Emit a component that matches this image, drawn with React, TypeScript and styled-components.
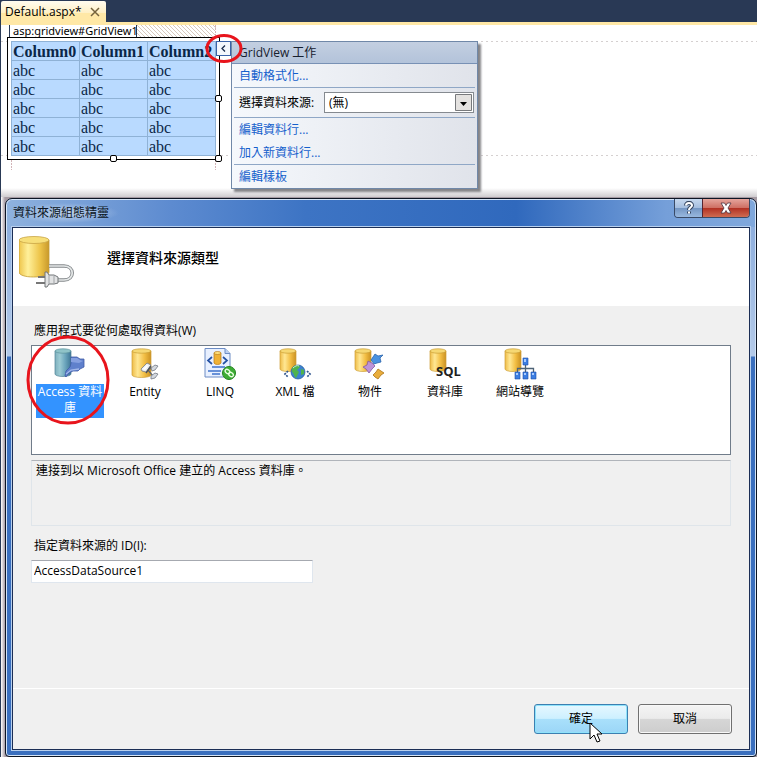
import React, { useState } from "react";
import styled, { createGlobalStyle, css } from "styled-components";

const uiFont = '"Open Sans", "Noto Sans CJK TC", sans-serif';
const dark = "#293955";

const GlobalStyle = createGlobalStyle`
  * { box-sizing: border-box; }
  html, body { margin: 0; padding: 0; }
  body { background: #fff; font: 12px/16px ${uiFont}; color: #000; }
  button, input, select { font: inherit; color: inherit; }
`;

const Page = styled.main`
  display: flex;
  flex-direction: column;
  min-height: 100vh;
  border-left: 1px solid ${dark};
  overflow: hidden;
`;

/* ---------- editor ---------- */

const TabBar = styled.header`
  display: flex;
  align-items: flex-end;
  height: 25px;
  background: ${dark};
  border-bottom: 3px solid #ffe8a6;
`;

const EditorTab = styled.div`
  display: flex;
  align-items: center;
  gap: 8px;
  height: 24px;
  margin-bottom: -3px;
  padding: 0 6px 2px 4px;
  border-radius: 2px 2px 0 0;
  background: linear-gradient(#fffcf0, #fff0c4 50%, #ffe8a6 52%);
`;

const TabClose = styled.button`
  display: flex;
  padding: 0;
  border: 0;
  background: none;
  color: #75633d;
`;

const Surface = styled.section`
  position: relative;
  height: 172px;
  padding-left: 6px;
  background: linear-gradient(#fff 163px, #cfcccf);
`;

const Guides = styled.svg`
  position: absolute;
  inset: 0;
  width: 100%;
  height: 100%;
`;

const ControlTag = styled.div`
  position: relative;
  width: 128px;
  height: 12px;
  margin-left: 2px;
  padding-left: 3px;
  border: solid ${dark};
  border-width: 0 1px;
  background: #fff;
  font: 11px/11px "Noto Sans", sans-serif;
  white-space: nowrap;
`;

const Selection = styled.div`
  position: relative;
  width: 213px;
  padding: 3px;
  border: 1px solid #000;
  background: #fff;
`;

const Grid = styled.table`
  width: 205px;
  border-collapse: collapse;
  table-layout: fixed;
  background: #b9daff;
  color: #0b2748;
  font: 16px/18px "Liberation Serif", serif;

  th, td {
    height: 19px;
    padding: 1px 0 0 1px;
    border: 1px solid #8fb2d6;
    line-height: 17px;
    text-align: left;
    white-space: nowrap;
  }
`;

const Handle = styled.span<{ $x: string; $y: string }>`
  position: absolute;
  left: ${(p) => p.$x};
  top: ${(p) => p.$y};
  width: 7px;
  height: 7px;
  margin: -4px 0 0 -4px;
  border: 1px solid #000;
  border-radius: 2px;
  background: #fff;
`;

const SmartTag = styled.button`
  position: absolute;
  left: 208px;
  top: 3px;
  z-index: 3;
  display: flex;
  align-items: center;
  justify-content: center;
  width: 15px;
  height: 15px;
  padding: 0;
  border: 1px solid #3a62a8;
  background: #f4f7fc;
`;

const Ring = styled.svg<{ $x: number; $y: number }>`
  position: absolute;
  left: ${(p) => p.$x}px;
  top: ${(p) => p.$y}px;
  z-index: 4;
  fill: none;
  stroke: #e8141c;
  stroke-width: 3;
  pointer-events: none;
`;

const TaskPanel = styled.aside`
  position: absolute;
  left: 230px;
  top: 16px;
  z-index: 2;
  width: 247px;
  border: 1px solid #7088a8;
  background: linear-gradient(90deg, #f5f8fc, #e0e3ea);
  box-shadow: 3px 3px 2px #848488;
`;

const PanelTitle = styled.h2`
  margin: 0;
  padding: 0 7px;
  border-bottom: 1px solid #7891b5;
  background: linear-gradient(#c3cfe1, #b3c3da);
  color: #16202e;
  font: 12px/21px ${uiFont};
`;

const TaskGroup = styled.div`
  display: flex;
  flex-direction: column;
  align-items: flex-start;
  margin: 0 2px;
  padding: 0 5px;
  & + & { border-top: 1px solid #8fa7c6; }
`;

const TaskLink = styled.a`
  color: #1560cc;
  line-height: 23px;
  text-decoration: none;
`;

const SourceRow = styled.label`
  display: flex;
  align-items: center;
  align-self: stretch;
  justify-content: space-between;
  height: 29px;
  margin-right: -4px;
`;

const SelectBox = styled.span`
  position: relative;
  width: 150px;
  height: 21px;
`;

const SourceSelect = styled.select`
  width: 100%;
  height: 100%;
  padding: 0 20px 0 4px;
  border: 1px solid #858a90;
  border-radius: 0;
  background: #fff;
  appearance: none;
`;

const Arrow = styled.svg`
  position: absolute;
  right: 2px;
  top: 2px;
  pointer-events: none;
`;

/* ---------- wizard dialog ---------- */

const DialogArea = styled.div`
  display: flex;
  flex: 1;
  padding: 1px 0 0 4px;
  background: linear-gradient(90deg, #fff, #a69ba3 4px);
`;

const Dialog = styled.section`
  display: flex;
  flex: 1;
  flex-direction: column;
  padding: 0 6px 6px;
  border: 1px solid #0c1524;
  border-radius: 7px 7px 4px 4px;
  background:
    linear-gradient(90deg, #8fb2de, #5d8bd0 22%, #3d74c4 40%, #3069bd 68%, #759fd9 88%, #80a8dc) 0 0 / 100% 28px no-repeat,
    linear-gradient(#86a9dc, #b4cae9 157px, #3a6fbe 158px);
  box-shadow: inset 0 0 0 1px #d4e4f7;
`;

const TitleBar = styled.header`
  display: flex;
  align-items: center;
  justify-content: space-between;
  height: 28px;
`;

const DialogTitle = styled.h1`
  margin: 0;
  padding: 0 10px 0 1px;
  background: radial-gradient(closest-side, #c0d3ec, transparent);
  color: #0a1422;
  font: 12px/20px ${uiFont};
`;

const WindowButtons = styled.div`
  display: flex;
  align-self: flex-start;
  height: 19px;
  border: 1px solid #394a66;
  border-top: 0;
  border-radius: 0 0 4px 4px;
  overflow: hidden;
`;

const WindowButton = styled.button<{ $danger?: boolean }>`
  display: flex;
  align-items: center;
  justify-content: center;
  width: ${(p) => (p.$danger ? 47 : 27)}px;
  padding: 0;
  border: 0;
  background: linear-gradient(#c6d8ee, #a5bedf 48%, #7395c2 50%, #98b8df);
  ${(p) =>
    p.$danger &&
    css`
      border-left: 1px solid #572430;
      background: linear-gradient(#e5a59c, #cf7064 48%, #b12f22 50%, #cf6c51);
    `}
`;

const Client = styled.div`
  display: flex;
  flex: 1;
  flex-direction: column;
  border: 1px solid #1b2e55;
  background: #f0f0f0;
  box-shadow: 0 0 0 1px #b8d0ee;
`;

const Banner = styled.div`
  display: flex;
  gap: 32px;
  height: 78px;
  padding: 7px 6px;
  background: #fff;
`;

const BannerText = styled.h2`
  margin: 0;
  padding-top: 13px;
  font: 500 14px/20px ${uiFont};
`;

const Body = styled.div`
  display: flex;
  flex: 1;
  flex-direction: column;
  padding: 17px 18px 0;
`;

const captionStyle = css`
  padding-left: 3px;
  line-height: 16px;
`;

const Caption = styled.label`
  ${captionStyle}
`;

const ListCaption = styled.div`
  ${captionStyle}
`;

const SourceList = styled.div`
  position: relative;
  display: flex;
  height: 110px;
  margin-top: 6px;
  padding: 2px 0;
  border: 1px solid #707c8a;
  background: #fff;
`;

const SourceItem = styled.button<{ $on: boolean }>`
  display: flex;
  flex-direction: column;
  align-items: center;
  gap: 4px;
  width: 75px;
  padding: 0 3px 0 4px;
  border: 0;
  background: none;
`;

const SourceLabel = styled.span<{ $on: boolean }>`
  width: 68px;
  padding-bottom: 2px;
  color: ${(p) => (p.$on ? "#fff" : "#000")};
  background: ${(p) => (p.$on ? "#3393ff" : "none")};
  line-height: 16px;
`;

const Description = styled.p`
  height: 66px;
  margin: 5px 0 12px;
  padding: 2px 4px;
  border: 1px solid #dfe5ea;
  border-top-color: #b0b4ba;
`;

const IdInput = styled.input`
  width: 282px;
  height: 23px;
  margin-top: 6px;
  padding: 0 2px 2px;
  border: 1px solid #dfe6ee;
  border-top-color: #a6a9b0;
  background: #fff;
`;

const Footer = styled.footer`
  display: flex;
  gap: 10px;
  justify-content: flex-end;
  padding: 15px 17px;
  border-top: 1px solid #fff;
`;

const ActionButton = styled.button<{ $primary?: boolean }>`
  position: relative;
  width: 94px;
  height: 30px;
  border: 1px solid ${(p) => (p.$primary ? "#3c7fb1" : "#707070")};
  border-radius: 3px;
  background: ${(p) =>
    p.$primary
      ? "linear-gradient(#e6f7ff, #cdf0ff 48%, #a9e0fb 50%, #9bd6f7)"
      : "linear-gradient(#f4f4f4, #ebebeb 48%, #d6d6d6 50%, #cdcdcd)"};
  box-shadow: inset 0 0 0 1px ${(p) => (p.$primary ? "#8fe3fb" : "#f8f8f8")};
`;

const Pointer = styled.svg`
  position: absolute;
  left: 54px;
  top: 17px;
`;

/* ---------- drawings ---------- */

type Kind = "access" | "entity" | "linq" | "xml" | "object" | "sql" | "site";

const Cylinder = ({ x, w, h, blue = false }: { x: number; w: number; h: number; blue?: boolean }) => {
  const id = blue ? "cylBlue" : "cylGold";
  const r = w / 2;
  return (
    <g>
      <defs>
        <linearGradient id={id}>
          <stop offset="0" stopColor={blue ? "#7fb0bd" : "#eebc48"} />
          <stop offset=".3" stopColor={blue ? "#9ccbd4" : "#ffe793"} />
          <stop offset=".65" stopColor={blue ? "#6aa4bb" : "#f3bf45"} />
          <stop offset="1" stopColor={blue ? "#3f7696" : "#cb9222"} />
        </linearGradient>
      </defs>
      <path
        d={`M${x} 3v${h - 5}a${r} 2.500 0 0 0 ${w} 0V3z`}
        fill={`url(#${id})`}
        stroke={blue ? "#4f8297" : "#cf9f38"}
        strokeWidth=".7"
      />
      <ellipse
        cx={x + r}
        cy="3"
        rx={r}
        ry="2.200"
        fill={blue ? "#8fc3c8" : "#f6d873"}
        stroke={blue ? "#5b929c" : "#c99e35"}
        strokeWidth=".7"
      />
    </g>
  );
};

const extras: Record<Kind, React.ReactNode> = {
  access: (
    <g>
      <path
        d="M17 9h6l3 2h4v8l-4 2-2 2h-5l-4 2-3 4-1-1 1-5 4-4 1-4z"
        fill="#5f80cc"
        stroke="#3f5aa6"
        strokeWidth=".8"
      />
      <path d="M17 10h6l3 2 3 1-4 2-8-1z" fill="#86a0e0" />
      <path d="M12 26l5-4 8-1" fill="none" stroke="#a3b8ea" strokeWidth="1.300" />
    </g>
  ),
  entity: (
    <g>
      <path d="M19 22l5 6M20 21l5-1" stroke="#5f656f" strokeWidth="1.200" />
      <g stroke="#747a84" strokeWidth=".8">
        <path d="M12 21l6-6 4 2-5 7-4-1z" fill="#eceff3" />
        <path d="M22 20l4-3 3 1-3 4-3 1zM22 28l4-3 3 1-3 4-4 1z" fill="#d3d8df" />
      </g>
      <path d="M14 21l4-4 1 1-3 4z" fill="#fff" />
      <path d="M17 25l5-7" stroke="#4c525c" strokeWidth="1.300" />
    </g>
  ),
  linq: (
    <g>
      <path d="M1 .5h20l5 5V29H1z" fill="#e8f0ff" stroke="#6c8cc4" />
      <path d="M21 .5v5h5" fill="#bdd0f0" stroke="#6c8cc4" />
      <path d="M8 9l-4 3.500 4 3.500M19 9l4 3.500-4 3.500" fill="none" stroke="#2451a3" strokeWidth="1.700" />
      <path d="M10 5v10c1 2 6 2 7 0V5z" fill="#efb135" stroke="#b87915" strokeWidth=".7" />
      <ellipse cx="13.500" cy="5" rx="3.500" ry="1.500" fill="#ffe07c" stroke="#b87915" strokeWidth=".7" />
      <path d="M8 19h13M4 23h13M8 26h8" stroke="#3e72cc" strokeWidth="1.500" />
      <circle cx="25" cy="25" r="6.500" fill="#3ead35" stroke="#23831f" />
      <g fill="none" stroke="#e8ffe0" strokeWidth="1.300">
        <ellipse cx="23.500" cy="23.500" rx="2.600" ry="1.800" transform="rotate(40 23.500 23.500)" />
        <ellipse cx="27" cy="26.500" rx="2.600" ry="1.800" transform="rotate(40 27 26.500)" />
      </g>
    </g>
  ),
  xml: (
    <g>
      <circle cx="19" cy="24" r="7" fill="#3c82cf" stroke="#24599a" strokeWidth=".7" />
      <path d="M13 20c3-4 8-3 8-1l-3 3 2 2-3 6c-2-1-2-5-4-6zM22 21l3 1v4l-3 1z" fill="#4fb34d" />
      <path d="M14 20c2-2 4-3 6-2" fill="none" stroke="#c9ecd8" />
      <path d="M9 23l-3 3 3 3M28 23l3 3-3 3" fill="none" stroke="#31568e" strokeWidth="1.700" strokeDasharray="2 1" />
    </g>
  ),
  object: (
    <g strokeWidth=".8">
      <path d="M17 12l4-6 3 2 5-1-3 3 1 4-4 1-3 1z" fill="#4a92e0" stroke="#2b65ac" />
      <path d="M9 19l4-2 1-4 4 2 3 3-3 3-3 4-3-4z" fill="#bd93d8" stroke="#8459a5" />
      <path d="M19 27l3-3 2-3 3 2 3 2-3 2-3 4-3-2z" fill="#e9ad3c" stroke="#ad7415" />
    </g>
  ),
  sql: (
    <text x="7" y="28" fontFamily="Open Sans, sans-serif" fontSize="13" fontWeight="700" fill="#1f1f1f">
      SQL
    </text>
  ),
  site: (
    <g>
      <path d="M21.500 17v7M13.500 24v-3.500h16V24" fill="none" stroke="#4d6275" strokeWidth="1.300" />
      <g fill="#3d7ee2" stroke="#1d4da8" strokeWidth=".6">
        <path d="M19 10h5v7h-5zM11 24h5v7h-5zM19 24h5v7h-5zM27 24h5v7h-5z" />
      </g>
      <path d="M20 11h2v3h-2zM12 25h2v2h-2zM20 25h2v2h-2zM28 25h2v2h-2z" fill="#a8cbff" />
    </g>
  ),
};

const SourceIcon = ({ kind }: { kind: Kind }) => (
  <svg width="32" height="32" viewBox="0 0 32 32" overflow="visible" aria-hidden="true">
    {kind === "access" && <Cylinder x={1} w={16} h={28} blue />}
    {kind === "entity" && <Cylinder x={3} w={19} h={29} />}
    {["xml", "object", "sql", "site"].includes(kind) && <Cylinder x={1} w={16} h={23} />}
    {extras[kind]}
  </svg>
);

const BannerIcon = () => (
  <svg width="56" height="54" viewBox="0 0 56 54" aria-hidden="true">
    <defs>
      <linearGradient id="bigGold">
        <stop offset="0" stopColor="#eec54b" />
        <stop offset=".3" stopColor="#fff09a" />
        <stop offset=".7" stopColor="#edc449" />
        <stop offset="1" stopColor="#c9992b" />
      </linearGradient>
    </defs>
    <path d="M0 5v32c0 3 6 5 14.500 5S30 40 30 37V5z" fill="url(#bigGold)" stroke="#c39c37" strokeWidth=".8" />
    <ellipse cx="15" cy="5" rx="15" ry="3.500" fill="#f7df79" stroke="#c9a545" strokeWidth=".8" />
    <path d="M30 31h15c11 0 11 14 0 14h-8" fill="none" stroke="#85898c" strokeWidth="3.500" />
    <path d="M30 31h15c11 0 11 14 0 14h-8" fill="none" stroke="#e5e8e8" strokeWidth="1.700" />
    <path d="M19 42h8M17 48h10" stroke="#777" strokeWidth="2" />
    <path d="M26 37h2l2 3h5l4 2v6l-4 1h-5l-2 3h-2z" fill="#e2e3e4" stroke="#737679" />
    <path d="M30 40v9M35 41v8" stroke="#a0a3a6" />
  </svg>
);

const sources: { kind: Kind; label: string }[] = [
  { kind: "access", label: "Access 資料庫" },
  { kind: "entity", label: "Entity" },
  { kind: "linq", label: "LINQ" },
  { kind: "xml", label: "XML 檔" },
  { kind: "object", label: "物件" },
  { kind: "sql", label: "資料庫" },
  { kind: "site", label: "網站導覽" },
];

const columns = ["Column0", "Column1", "Column2"];
const rows = [0, 1, 2, 3, 4];

export default function App() {
  const [active, setActive] = useState<Kind>("access");
  const [sourceId, setSourceId] = useState("AccessDataSource1");

  return (
    <Page>
      <GlobalStyle />
      <TabBar>
        <EditorTab>
          Default.aspx*
          <TabClose aria-label="Close">
            <svg width="10" height="10" viewBox="0 0 10 10" stroke="currentColor" strokeWidth="1.500">
              <path d="M1 1l8 8M9 1l-8 8" />
            </svg>
          </TabClose>
        </EditorTab>
      </TabBar>

      <Surface>
        <Guides aria-hidden="true">
          <defs>
            <pattern id="hatch" width="4" height="4" patternUnits="userSpaceOnUse">
              <path d="M0 0l4 4" stroke="#d8c8bd" strokeWidth="1" />
            </pattern>
          </defs>
          <rect x="135" width="80" height="12" fill="url(#hatch)" />
          <path d="M0 16.500h2000M0 130.500h2000" stroke="#d5d0d0" strokeDasharray="2 3" />
          <path d="M10.500 0v145M214.500 0v145" stroke="#d3b5b8" strokeDasharray="2 1" />
        </Guides>
        <ControlTag>asp:gridview#GridView1</ControlTag>
        <Selection>
          <Grid>
            <thead>
              <tr>
                {columns.map((c) => (
                  <th key={c} scope="col">{c}</th>
                ))}
              </tr>
            </thead>
            <tbody>
              {rows.map((r) => (
                <tr key={r}>
                  {columns.map((c) => (
                    <td key={c}>abc</td>
                  ))}
                </tr>
              ))}
            </tbody>
          </Grid>
          <Handle $x="100%" $y="50%" />
          <Handle $x="50%" $y="100%" />
          <Handle $x="100%" $y="100%" />
          <SmartTag aria-label="GridView 工作">
            <svg width="5" height="7" viewBox="0 0 5 7" fill="none" stroke="#1b2d4d" strokeWidth="1.300">
              <path d="M4 .5L1 3.500l3 3" />
            </svg>
          </SmartTag>
          <Ring $x={197} $y={-5} width="40" height="32">
            <ellipse cx="19" cy="15.500" rx="17" ry="13" />
          </Ring>
        </Selection>

        <TaskPanel>
          <PanelTitle>GridView 工作</PanelTitle>
          <TaskGroup>
            <TaskLink href="#format">自動格式化...</TaskLink>
          </TaskGroup>
          <TaskGroup>
            <SourceRow>
              選擇資料來源:
              <SelectBox>
                <SourceSelect defaultValue="none">
                  <option value="none">(無)</option>
                </SourceSelect>
                <Arrow width="17" height="17" viewBox="0 0 17 17" aria-hidden="true">
                  <path d="M.5.5h16v16H.5z" fill="#e4e2e0" stroke="#77797c" />
                  <path d="M5 8h7l-3.500 4z" fill="#000" />
                </Arrow>
              </SelectBox>
            </SourceRow>
          </TaskGroup>
          <TaskGroup>
            <TaskLink href="#columns">編輯資料行...</TaskLink>
            <TaskLink href="#add">加入新資料行...</TaskLink>
          </TaskGroup>
          <TaskGroup>
            <TaskLink href="#templates">編輯樣板</TaskLink>
          </TaskGroup>
        </TaskPanel>
      </Surface>

      <DialogArea>
        <Dialog role="dialog" aria-labelledby="wizard-title">
          <TitleBar>
            <DialogTitle id="wizard-title">資料來源組態精靈</DialogTitle>
            <WindowButtons>
              <WindowButton aria-label="Help">
                <svg width="12" height="14" viewBox="0 0 12 14" fill="none">
                  <path d="M3 4.500C3 1 9 1 9 4.500 9 6.500 6 6 6 9M6 10.500v2" stroke="#34445f" strokeWidth="4" />
                  <path d="M3 4.500C3 1 9 1 9 4.500 9 6.500 6 6 6 9M6 10.500v2" stroke="#fff" strokeWidth="2" />
                </svg>
              </WindowButton>
              <WindowButton $danger aria-label="Close dialog">
                <svg width="14" height="12" viewBox="0 0 14 12">
                  <path
                    d="M2 1h3.500L7 3.500 8.500 1H12L9 6l3 5H8.500L7 8.500 5.500 11H2l3-5z"
                    fill="#fff"
                    stroke="#4b3440"
                    strokeWidth=".8"
                  />
                </svg>
              </WindowButton>
            </WindowButtons>
          </TitleBar>

          <Client>
            <Banner>
              <BannerIcon />
              <BannerText>選擇資料來源類型</BannerText>
            </Banner>
            <Body>
              <ListCaption id="source-caption">應用程式要從何處取得資料(W)</ListCaption>
              <SourceList role="group" aria-labelledby="source-caption">
                {sources.map((s) => (
                  <SourceItem
                    key={s.kind}
                    $on={active === s.kind}
                    aria-pressed={active === s.kind}
                    onClick={() => setActive(s.kind)}
                  >
                    <SourceIcon kind={s.kind} />
                    <SourceLabel $on={active === s.kind}>{s.label}</SourceLabel>
                  </SourceItem>
                ))}
                <Ring $x={-7} $y={-12} width="88" height="92">
                  <ellipse cx="43" cy="46" rx="40" ry="43" />
                </Ring>
              </SourceList>
              <Description>連接到以 Microsoft Office 建立的 Access 資料庫。</Description>
              <Caption htmlFor="source-id">指定資料來源的 ID(I):</Caption>
              <IdInput id="source-id" value={sourceId} onChange={(e) => setSourceId(e.target.value)} />
            </Body>
            <Footer>
              <ActionButton $primary>
                確定
                <Pointer width="14" height="21" viewBox="0 0 14 21" aria-hidden="true">
                  <path d="M1 1v16l4-4 3 7 3-1-3-7h5z" fill="#fff" stroke="#000" />
                </Pointer>
              </ActionButton>
              <ActionButton>取消</ActionButton>
            </Footer>
          </Client>
        </Dialog>
      </DialogArea>
    </Page>
  );
}
